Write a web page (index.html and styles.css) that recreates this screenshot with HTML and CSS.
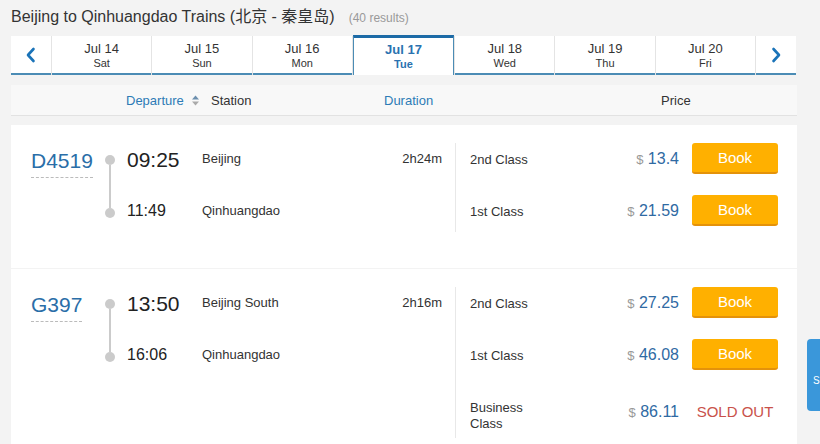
FILE: index.html
```html
<!DOCTYPE html>
<html lang="en">
<head>
<meta charset="utf-8">
<title>Beijing to Qinhuangdao Trains</title>
<link rel="stylesheet" href="styles.css">
</head>
<body>
<div class="page">
  <h1 class="title">Beijing to Qinhuangdao Trains (北京 - 秦皇岛)<span class="count">(40 results)</span></h1>

  <div class="dates">
    <div class="arrow">
      <svg width="12" height="16" viewBox="0 0 12 16"><polyline points="8.5,2 3,8 8.5,14" fill="none" stroke="#1a73b8" stroke-width="2.6" stroke-linecap="round" stroke-linejoin="round"/></svg>
    </div>
    <div class="date"><span class="d">Jul 14</span><span class="w">Sat</span></div>
    <div class="date"><span class="d">Jul 15</span><span class="w">Sun</span></div>
    <div class="date"><span class="d">Jul 16</span><span class="w">Mon</span></div>
    <div class="date active"><span class="d">Jul 17</span><span class="w">Tue</span></div>
    <div class="date"><span class="d">Jul 18</span><span class="w">Wed</span></div>
    <div class="date"><span class="d">Jul 19</span><span class="w">Thu</span></div>
    <div class="date"><span class="d">Jul 20</span><span class="w">Fri</span></div>
    <div class="arrow">
      <svg width="12" height="16" viewBox="0 0 12 16"><polyline points="3.5,2 9,8 3.5,14" fill="none" stroke="#1a73b8" stroke-width="2.6" stroke-linecap="round" stroke-linejoin="round"/></svg>
    </div>
  </div>

  <div class="thead">
    <span></span>
    <span class="th link">Departure <svg class="sort" width="7" height="11" viewBox="0 0 7 11"><polygon points="3.5,0.5 7,4.5 0,4.5" fill="#6c8fae"/><polygon points="0,6.5 7,6.5 3.5,10.5" fill="#aaa"/></svg></span>
    <span class="th">Station</span>
    <span class="th link">Duration</span>
    <span class="th">Price</span>
  </div>

  <div class="card">
    <div class="trip">
      <div class="train-no"><span>D4519</span></div>
      <div class="timeline"><i class="dot"></i><i class="line"></i><i class="dot"></i></div>
      <div class="time dep">09:25</div>
      <div class="station">Beijing</div>
      <div class="duration">2h24m</div>
      <div class="time arr">11:49</div>
      <div class="station">Qinhuangdao</div>
    </div>
    <div class="prices">
      <div class="prow">
        <div class="cls">2nd Class</div>
        <div class="price"><span class="cur">$</span> 13.4</div>
        <button class="book">Book</button>
      </div>
      <div class="prow">
        <div class="cls">1st Class</div>
        <div class="price"><span class="cur">$</span> 21.59</div>
        <button class="book">Book</button>
      </div>
    </div>
  </div>

  <div class="card">
    <div class="trip">
      <div class="train-no"><span>G397</span></div>
      <div class="timeline"><i class="dot"></i><i class="line"></i><i class="dot"></i></div>
      <div class="time dep">13:50</div>
      <div class="station">Beijing South</div>
      <div class="duration">2h16m</div>
      <div class="time arr">16:06</div>
      <div class="station">Qinhuangdao</div>
    </div>
    <div class="prices">
      <div class="prow">
        <div class="cls">2nd Class</div>
        <div class="price"><span class="cur">$</span> 27.25</div>
        <button class="book">Book</button>
      </div>
      <div class="prow">
        <div class="cls">1st Class</div>
        <div class="price"><span class="cur">$</span> 46.08</div>
        <button class="book">Book</button>
      </div>
      <div class="prow">
        <div class="cls">Business Class</div>
        <div class="price"><span class="cur">$</span> 86.11</div>
        <div class="sold">SOLD OUT</div>
      </div>
    </div>
  </div>
</div>
<div class="side-tab">S</div>
</body>
</html>
```
FILE: styles.css
```css
* { box-sizing: border-box; }
html, body { margin: 0; padding: 0; }
body {
  background: #f3f3f3;
  font-family: Arial, "Liberation Sans", "Noto Sans CJK SC", sans-serif;
  color: #333;
  overflow: hidden;
}
.page { padding: 0 23px 0 11px; width: 820px; }

.title {
  margin: 0;
  padding-top: 7px;
  height: 36px;
  font-size: 16px;
  line-height: 20px;
  font-weight: normal;
  color: #333;
}
.count { font-size: 12px; color: #999; margin-left: 14px; }

.dates {
  display: flex;
  gap: 1px;
  background: #e4e4e4;
  height: 39px;
  width: 785px;
}
.arrow {
  width: 40px;
  flex: none;
  background: #fff;
  border-bottom: 2px solid #4b8cb5;
  display: flex;
  align-items: center;
  justify-content: center;
}
.date {
  flex: 1;
  background: #fff;
  border-bottom: 2px solid #4b8cb5;
  display: flex;
  flex-direction: column;
  align-items: center;
  padding-top: 5px;
  color: #333;
}
.date .d { font-size: 13px; line-height: 15px; }
.date .w { font-size: 11px; line-height: 14px; }
.date.active {
  margin-top: -1px;
  border: 1px solid #4b8cb5;
  border-top: 3px solid #1c6aa6;
  border-bottom: none;
  color: #2a72b0;
  font-weight: bold;
  padding-top: 4px;
}

.thead {
  margin-top: 10px;
  display: grid;
  grid-template-columns: 115px 85px 173px 277px auto;
  align-items: center;
  height: 31px;
  background: #f8f8f8;
  border-bottom: 1px solid #e2e2e2;
  font-size: 13px;
  width: 786px;
}
.th { color: #333; }
.th.link { color: #2d7bb6; }
.sort { margin-left: 5px; vertical-align: -1px; }

.card {
  margin-top: 9px;
  background: #fff;
  display: flex;
  width: 786px;
  padding: 18px 0 36px;
}
.card + .card { margin-top: 1px; }

.trip {
  width: 444px;
  flex: none;
  padding: 0 13px 0 20px;
  display: grid;
  grid-template-columns: 74px 22px 75px 1fr auto;
  grid-template-rows: 31px 31px;
  row-gap: 21px;
  align-items: center;
  align-self: flex-start;
}
.train-no { grid-row: 1; grid-column: 1; align-self: start; padding-top: 6px; }
.train-no span {
  display: inline-block;
  font-size: 21px;
  line-height: 24px;
  color: #2a6ea8;
  padding-bottom: 4px;
  border-bottom: 1px dashed #bbb;
}
.timeline {
  grid-row: 1 / span 2;
  grid-column: 2;
  align-self: start;
  margin-top: 12px;
  display: flex;
  flex-direction: column;
  width: 10px;
  align-items: center;
}
.dot { display: block; width: 10px; height: 10px; border-radius: 50%; background: #cbcbcb; }
.line { display: block; width: 2px; height: 43px; background: #cbcbcb; }
.time { color: #222; }
.time.dep { grid-row: 1; grid-column: 3; font-size: 21px; padding-top: 3px; }
.time.arr { grid-row: 2; grid-column: 3; font-size: 16px; }
.station { font-size: 13px; color: #333; grid-column: 4; }
.duration { font-size: 13px; color: #333; grid-column: 5; text-align: right; }

.prices {
  flex: 1;
  border-left: 1px solid #e8e8e8;
  padding: 0 19px 6px 14px;
  display: flex;
  flex-direction: column;
  gap: 21px;
}
.prow {
  display: flex;
  align-items: center;
  min-height: 31px;
}
.cls {
  width: 86px;
  align-self: flex-start;
  margin-top: 9px;
  font-size: 13px;
  line-height: 16px;
  color: #333;
}
.price {
  flex: 1;
  text-align: right;
  font-size: 16px;
  color: #2f6aa3;
  margin-right: 13px;
}
.cur { font-size: 13px; color: #999; }
.book {
  width: 86px;
  height: 31px;
  border: none;
  border-bottom: 2px solid #e4920a;
  border-radius: 3px;
  background: #ffb000;
  color: #fff;
  font-family: Arial, "Liberation Sans", sans-serif;
  font-size: 15px;
  padding: 0;
}
.sold {
  width: 86px;
  text-align: center;
  color: #c9514a;
  font-size: 15px;
}

.side-tab {
  position: fixed;
  left: 807px;
  top: 339px;
  width: 13px;
  height: 72px;
  overflow: hidden;
  background: #3a97da;
  border-radius: 4px 0 0 4px;
  color: #fff;
  font-size: 10px;
  padding: 36px 0 0 6px;
  line-height: 12px;
}
```
